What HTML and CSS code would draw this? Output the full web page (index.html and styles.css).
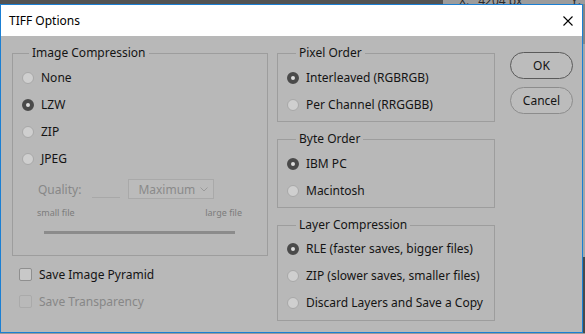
FILE: index.html
```html
<!DOCTYPE html>
<html lang="en">
<head>
  <meta charset="UTF-8" />
  <meta name="viewport" content="width=device-width, initial-scale=1.0"/>
  <title>TIFF Options</title>
  <link rel="stylesheet" href="styles.css">
</head>
<body>
  <div class="screen">
    <div class="topbar">
      <div class="topbar-dark"></div>
      <div class="topbar-info">
        <span class="info-x">X:</span>
        <span class="info-val">4204 px</span>
        <span class="info-y">Y:</span>
      </div>
    </div>

    <div class="main">
      <div class="dialog">
        <div class="titlebar">
          <span class="title">TIFF Options</span>
          <svg class="close" width="10" height="10" viewBox="0 0 10 10">
            <path d="M0.5 0.5 L9.5 9.5 M9.5 0.5 L0.5 9.5" stroke="#000" stroke-width="1.1" fill="none"/>
          </svg>
        </div>

        <div class="content">
          <div class="col-left">
            <fieldset class="group group-image">
              <legend>Image Compression</legend>
              <label class="opt"><span class="radio"></span>None</label>
              <label class="opt"><span class="radio on"></span>LZW</label>
              <label class="opt"><span class="radio"></span>ZIP</label>
              <label class="opt"><span class="radio"></span>JPEG</label>

              <div class="quality">
                <span class="quality-label">Quality:</span>
                <span class="quality-input"></span>
                <span class="quality-select">
                  Maximum
                  <svg width="8" height="5" viewBox="0 0 8 5">
                    <path d="M0.5 0.5 L4 4 L7.5 0.5" stroke="#9a9a9a" stroke-width="1" fill="none"/>
                  </svg>
                </span>
              </div>
              <div class="scale">
                <span>small file</span>
                <span>large file</span>
              </div>
              <div class="track"></div>
            </fieldset>

            <div class="checks">
              <label class="opt"><span class="box"></span>Save Image Pyramid</label>
              <label class="opt disabled"><span class="box"></span>Save Transparency</label>
            </div>
          </div>

          <div class="col-right">
            <fieldset class="group">
              <legend>Pixel Order</legend>
              <label class="opt"><span class="radio on"></span>Interleaved (RGBRGB)</label>
              <label class="opt"><span class="radio"></span>Per Channel (RRGGBB)</label>
            </fieldset>

            <fieldset class="group">
              <legend>Byte Order</legend>
              <label class="opt"><span class="radio on"></span>IBM PC</label>
              <label class="opt"><span class="radio"></span>Macintosh</label>
            </fieldset>

            <fieldset class="group group-layer">
              <legend>Layer Compression</legend>
              <label class="opt"><span class="radio on"></span>RLE (faster saves, bigger files)</label>
              <label class="opt"><span class="radio"></span>ZIP (slower saves, smaller files)</label>
              <label class="opt"><span class="radio"></span>Discard Layers and Save a Copy</label>
            </fieldset>
          </div>

          <div class="buttons">
            <button class="btn btn-default">OK</button>
            <button class="btn">Cancel</button>
          </div>
        </div>
      </div>
      <div class="side"></div>
    </div>

    <div class="bottom"></div>
  </div>
</body>
</html>
```

FILE: styles.css
```css
body {
  margin: 0;
  font-family: "Noto Sans", Arial, sans-serif;
  font-size: 12px;
  color: #141414;
  background-color: #a5a5a5;
}

.screen {
  width: 585px;
  height: 334px;
  display: flex;
  flex-direction: column;
  overflow: hidden;
}

/* strip of the app behind the dialog */
.topbar {
  height: 4px;
  display: flex;
  overflow: hidden;
}

.topbar-dark {
  width: 443px;
  background-color: #535353;
}

.topbar-info {
  flex: 1;
  display: flex;
  align-items: flex-end;
  background-color: #9c9c9c;
  color: #2a2a2a;
  font-size: 12px;
  line-height: 12px;
}

.topbar-info span {
  margin-bottom: -3px;
}

.info-x {
  margin-left: 16px;
}

.info-val {
  margin-left: 9px;
}

.info-y {
  margin-left: auto;
  margin-right: 4px;
}

.main {
  display: flex;
  height: 329px;
}

.dialog {
  width: 583px;
  box-sizing: border-box;
  border: 1px solid #1b7fd3;
  background-color: #b8b8b8;
  display: flex;
  flex-direction: column;
}

.side {
  flex: 1;
  background: linear-gradient(#858585 0, #858585 40px, #a6a6a6 40px, #a6a6a6 253px, #4a4a4a 253px);
}

.bottom {
  height: 1px;
  background-color: #9a9a9a;
}

.titlebar {
  height: 31px;
  flex-shrink: 0;
  background-color: #fff;
  display: flex;
  align-items: center;
  justify-content: space-between;
  padding: 0 9px 0 8px;
}

.title {
  color: #000;
  font-size: 12px;
}

.content {
  display: flex;
  align-items: flex-start;
  padding: 9px 9px 0 11px;
}

/* group boxes */
.group {
  margin: 0;
  min-width: 0;
  box-sizing: border-box;
  border: 1px solid #9d9d9d;
  padding: 3px 0 3px 9px;
}

.group legend {
  padding: 0 3px;
  margin-left: 7px;
  line-height: 16px;
}

.col-left {
  width: 256px;
  display: flex;
  flex-direction: column;
}

.group-image {
  width: 256px;
  padding-bottom: 21px;
}

.col-right {
  width: 218px;
  margin-left: 9px;
  display: flex;
  flex-direction: column;
  gap: 9px;
}

.col-right .group {
  width: 218px;
}

.col-right .group legend {
  margin-left: 9px;
}

.group-layer {
  padding-top: 2px;
  padding-bottom: 4px;
}

/* options */
.opt {
  display: flex;
  align-items: center;
  height: 27px;
  gap: 7px;
  white-space: nowrap;
}

.radio {
  width: 12px;
  height: 12px;
  flex-shrink: 0;
  box-sizing: border-box;
  border-radius: 50%;
  border: 1px solid #a8a8a8;
  background-color: #cfcfcf;
}

.radio.on {
  border: 4px solid #4a4a4a;
  background-color: #dedede;
}

.checks {
  margin-top: 5px;
}

.checks .opt {
  padding-left: 7px;
  gap: 7px;
}

.box {
  width: 13px;
  height: 13px;
  flex-shrink: 0;
  box-sizing: border-box;
  border-radius: 2px;
  border: 1px solid #8f8f8f;
  background-color: #c8c8c8;
}

.opt.disabled {
  color: #878787;
}

.opt.disabled .box {
  border-color: #aaaaaa;
  background-color: #b9b9b9;
}

/* jpeg quality (disabled) */
.quality {
  display: flex;
  align-items: center;
  height: 22px;
  margin-top: 6px;
  margin-left: 16px;
  color: #878787;
}

.quality-input {
  width: 28px;
  height: 17px;
  margin-left: 11px;
  border-bottom: 1px solid #a8a8a8;
}

.quality-select {
  width: 86px;
  height: 20px;
  margin-left: 8px;
  box-sizing: border-box;
  border: 1px solid #a9a9a9;
  background-color: #bbbbbb;
  display: flex;
  align-items: center;
  justify-content: space-between;
  padding: 0 5px 0 9px;
  color: #8a8a8a;
}

.scale {
  width: 205px;
  margin-top: 7px;
  margin-left: 15px;
  display: flex;
  justify-content: space-between;
  font-size: 9px;
  line-height: 12px;
  color: #7c7c7c;
}

.track {
  width: 191px;
  height: 3px;
  margin-top: 12px;
  margin-left: 22px;
  background-color: #8b8b8b;
}

/* buttons */
.buttons {
  margin-left: 15px;
  margin-top: 7px;
  display: flex;
  flex-direction: column;
  gap: 8px;
}

.btn {
  width: 63px;
  height: 27px;
  border-radius: 14px;
  border: 1px solid #8c8c8c;
  background-color: #bcbcbc;
  font-family: "Noto Sans", Arial, sans-serif;
  font-size: 12px;
  color: #141414;
  padding: 0;
}

.btn-default {
  border-color: #5a5a5a;
}
```
